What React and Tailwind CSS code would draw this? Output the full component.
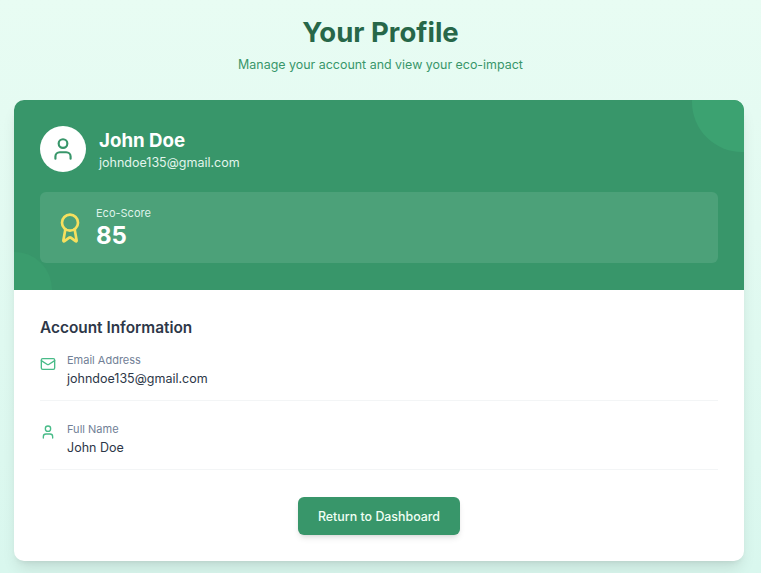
import { Award, Mail, User } from 'lucide-react';

export default function App() {
  return (
    <div className="min-h-[573px] h-[573px] overflow-hidden bg-gradient-to-b from-[#e8fcf3] to-[#d9f7ee] px-[14px] pt-[14px] font-['Inter',sans-serif]">
      <div className="text-center mb-[25px]">
        <h1 className="text-[27.5px] leading-[36px] font-bold text-[#276749]">Your Profile</h1>
        <p className="mt-[5px] text-[12.45px] leading-[20px] text-[#38966a]">Manage your account and view your eco-impact</p>
      </div>

      <div className="w-[730px] overflow-hidden rounded-[10px] bg-white shadow-lg">
        <div className="relative overflow-hidden bg-[#38966a] px-[26px] pt-[26px] pb-[26px] h-[190px]">
          <div className="absolute -top-[48px] -right-[48px] h-[100px] w-[100px] rounded-full bg-[#3ca271]" />
          <div className="absolute -bottom-[37px] -left-[37px] h-[75px] w-[75px] rounded-full bg-[#3a9c6d]" />

          <div className="relative flex items-center gap-[13px]">
            <div className="flex h-[46px] w-[46px] items-center justify-center rounded-full bg-white">
              <User size={26} strokeWidth={2} className="text-[#38966a]" />
            </div>
            <div>
              <h2 className="pt-[1px] -mb-[1px] text-[18.7px] leading-[28px] font-bold text-white">John Doe</h2>
              <p className="text-[12.5px] leading-[18px] text-[#e2f5ec]">johndoe135@gmail.com</p>
            </div>
          </div>

          <div className="relative mt-[20px] flex h-[71px] items-center gap-[10px] rounded-[6px] bg-white/10 px-[14px]">
            <Award size={32} strokeWidth={2} className="text-[#f6e05e]" />
            <div className="pt-[2px]">
              <p className="text-[11px] leading-[14px] text-[#dff3ea]">Eco-Score</p>
              <p className="mt-[1px] text-[24px] leading-[30px] font-bold text-white">85</p>
            </div>
          </div>
        </div>

        <div className="px-[26px] pt-[27px] h-[271px]">
          <h3 className="text-[15.4px] leading-[22px] font-semibold text-[#2d3748]">Account Information</h3>

          <div className="mt-[13px] flex gap-[11px] border-b border-[#f3f5f6] pb-[11px]">
            <Mail size={16} strokeWidth={2} className="mt-[4px] text-[#48bb88]" />
            <div>
              <p className="text-[11px] leading-[17px] text-[#718096]">Email Address</p>
              <p className="text-[12.5px] leading-[20px] text-[#2d3748]">johndoe135@gmail.com</p>
            </div>
          </div>

          <div className="mt-[20px] flex gap-[11px] border-b border-[#f3f5f6] pb-[11px]">
            <User size={16} strokeWidth={2} className="mt-[3px] text-[#48bb88]" />
            <div>
              <p className="text-[11px] leading-[17px] text-[#718096]">Full Name</p>
              <p className="text-[12.5px] leading-[20px] text-[#2d3748]">John Doe</p>
            </div>
          </div>

          <div className="mt-[27px] flex justify-center">
            <button className="h-[38px] w-[162px] rounded-[6px] bg-[#38966a] pt-[2px] text-[12.4px] font-medium text-[#f0fff4] shadow-md">
              Return to Dashboard
            </button>
          </div>
        </div>
      </div>
    </div>
  );
}
